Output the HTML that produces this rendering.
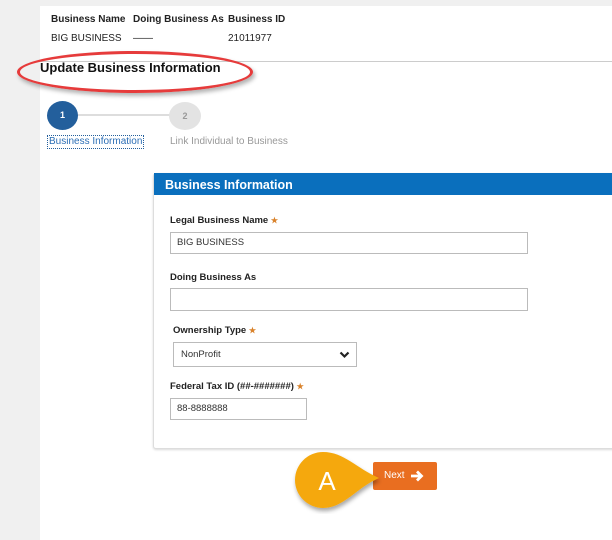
<!DOCTYPE html>
<html><head><style>
body{margin:0;width:612px;height:540px;background:#f0f0f0;font-family:"Liberation Sans",sans-serif;position:relative;overflow:hidden}
.a{position:absolute}
.main{left:40px;top:6px;width:572px;height:534px;background:#fff}
.h{font-size:10px;font-weight:bold;color:#222}
.t{font-size:10px;color:#222}
.lbl{font-size:9.5px;font-weight:bold;color:#222}
.star{color:#d9822b;font-size:8px}
.inp{border:1px solid #bbb;background:#fff;box-sizing:border-box;font-size:9.5px;color:#333;padding-left:6px;line-height:20px}
</style></head><body>
<div class="a main"></div>
<div class="a h" style="left:51px;top:14px">Business Name</div>
<div class="a h" style="left:133px;top:14px">Doing Business As</div>
<div class="a h" style="left:228px;top:14px">Business ID</div>
<div class="a t" style="left:51px;top:33px">BIG BUSINESS</div>
<div class="a t" style="left:133px;top:33px">——</div>
<div class="a t" style="left:228px;top:33px">21011977</div>
<div class="a" style="left:40px;top:61px;width:572px;height:1px;background:#ccc"></div>
<div class="a" style="left:17px;top:51px;width:230px;height:36px;border:3px solid #e63b3b;border-radius:50%;box-shadow:2px 3px 4px rgba(0,0,0,.3)"></div>
<div class="a" style="left:40px;top:60px;font-size:13px;font-weight:bold;color:#111">Update Business Information</div>
<div class="a" style="left:62px;top:114px;width:124px;height:2px;background:#ddd"></div>
<div class="a" style="left:47px;top:101px;width:31px;height:29px;border-radius:50%;background:#235f9c;color:#fff;font-size:9px;font-weight:bold;text-align:center;line-height:29px">1</div>
<div class="a" style="left:169px;top:102px;width:32px;height:28px;border-radius:50%;background:#e3e3e3;color:#999;font-size:9px;font-weight:bold;text-align:center;line-height:28px">2</div>
<div class="a" style="left:47px;top:135px;font-size:10px;color:#2a6db5;border:1px dotted #235f9c;padding:0 1px;line-height:12px">Business Information</div>
<div class="a" style="left:170px;top:136px;font-size:10px;color:#999">Link Individual to Business</div>
<div class="a" style="left:153px;top:173px;width:470px;height:274px;border:1px solid #ddd;border-radius:3px;box-shadow:0 1px 2px rgba(0,0,0,.15);background:#fff"></div>
<div class="a" style="left:154px;top:173px;width:458px;height:22px;background:#0a6fbd;color:#fff;font-size:12.5px;font-weight:bold;line-height:24px;padding-left:11px;box-sizing:border-box">Business Information</div>
<div class="a lbl" style="left:170px;top:215px">Legal Business Name <span class="star">★</span></div>
<div class="a inp" style="left:170px;top:232px;width:358px;height:22px">BIG BUSINESS</div>
<div class="a lbl" style="left:170px;top:272px">Doing Business As</div>
<div class="a inp" style="left:170px;top:288px;width:358px;height:23px"></div>
<div class="a lbl" style="left:173px;top:325px">Ownership Type <span class="star">★</span></div>
<div class="a inp" style="left:173px;top:342px;width:184px;height:25px;line-height:23px;padding-left:7px">NonProfit
<svg class="a" style="right:6px;top:8px" width="11" height="8" viewBox="0 0 11 8"><path d="M1.5 1.5L5.5 5.5L9.5 1.5" stroke="#222" stroke-width="2.2" fill="none"/></svg></div>
<div class="a lbl" style="left:170px;top:381px">Federal Tax ID (##-#######) <span class="star">★</span></div>
<div class="a inp" style="left:170px;top:398px;width:137px;height:22px">88-8888888</div>
<div class="a" style="left:373px;top:462px;width:64px;height:28px;background:#e96e20;border-radius:2px;color:#fff;font-size:10px;line-height:28px;padding-left:11px;box-sizing:border-box">Next
<svg class="a" style="left:37px;top:8px" width="14" height="12" viewBox="0 0 14 12"><path d="M1 6H11M7 1.5L11.5 6L7 10.5" stroke="#fff" stroke-width="2.8" fill="none"/></svg></div>
<svg class="a" style="left:290px;top:450px" width="96" height="66" viewBox="0 0 96 66">
<defs><filter id="s"><feDropShadow dx="1" dy="3" stdDeviation="2" flood-opacity=".35"/></filter></defs>
<path d="M33 2C54 2 66 18 89 28C66 38 54 58 33 58A28 28 0 0 1 33 2Z" fill="#f5a80e" filter="url(#s)"/>
<text x="37" y="40" font-family="Liberation Sans,sans-serif" font-size="26" fill="#fff" text-anchor="middle">A</text>
</svg>
</body></html>
